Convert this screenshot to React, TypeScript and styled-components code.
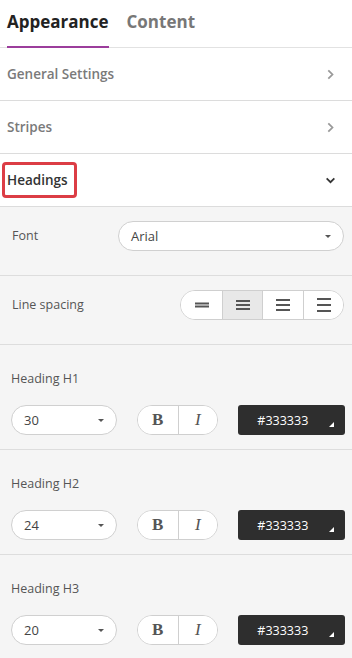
import * as React from 'react';
import styled, { createGlobalStyle } from 'styled-components';

const Global = createGlobalStyle`
  html, body {
    margin: 0;
    padding: 0;
    background: #fff;
    font-family: "Open Sans", "Noto Sans", sans-serif;
  }
  * { box-sizing: border-box; }
`;

const Panel = styled.div`
  width: 352px;
  height: 658px;
  overflow: hidden;
  background: #fff;
`;

const Tabs = styled.div`
  display: flex;
  gap: 18px;
  padding: 0 7px;
  height: 48px;
  border-bottom: 1px solid #e2e2e2;
`;

const Tab = styled.div<{ $active?: boolean }>`
  font-size: 17px;
  font-weight: 700;
  padding-top: 10px;
  color: ${(p) => (p.$active ? '#222' : '#777')};
  border-bottom: 2px solid ${(p) => (p.$active ? '#9c3d9c' : 'transparent')};
  margin-bottom: -1px;
`;

const Section = styled.div`
  height: 53px;
  display: flex;
  align-items: center;
  justify-content: space-between;
  padding: 0 16px 0 7px;
  border-bottom: 1px solid #dcdcdc;
`;

const SectionTitle = styled.div<{ $open?: boolean }>`
  font-size: 13.5px;
  font-weight: 600;
  color: ${(p) => (p.$open ? '#333' : '#7a7a7a')};
`;

// red highlight drawn around the open section's title
const Highlight = styled.span`
  display: inline-block;
  margin-left: -5px;
  padding: 5px 6px 5px 2px;
  border: 3px solid #dc3d45;
  border-radius: 4px;
  line-height: 20px;
`;

const Body = styled.div`
  background: #f5f5f5;
`;

const Row = styled.div`
  height: 69px;
  display: flex;
  align-items: flex-start;
  justify-content: space-between;
  padding: 14px 8px 0 12px;
  border-bottom: 1px solid #dddddd;
`;

const RowLabel = styled.div`
  font-size: 12.5px;
  color: #555;
  line-height: 30px;
`;

const HeadingBlock = styled.div`
  height: 105px;
  padding: 25px 7px 0 11px;
  border-bottom: 1px solid #dddddd;
`;

const Label = styled.div`
  font-size: 12.5px;
  color: #555;
  line-height: 17px;
`;

const Controls = styled.div`
  margin-top: 18px;
  display: flex;
  align-items: center;
  gap: 20px;
`;

const Select = styled.div<{ $w: number }>`
  width: ${(p) => p.$w}px;
  height: 30px;
  background: #fff;
  border: 1px solid #d0d0d0;
  border-radius: 15px;
  display: flex;
  align-items: center;
  justify-content: space-between;
  padding: 0 12px 0 12px;
  font-size: 13px;
  color: #444;
`;

const Caret = styled.span`
  width: 0;
  height: 0;
  border-left: 3px solid transparent;
  border-right: 3px solid transparent;
  border-top: 3px solid #555;
`;

const Group = styled.div`
  display: flex;
  height: 30px;
  background: #fff;
  border: 1px solid #cfcfcf;
  border-radius: 15px;
  overflow: hidden;
`;

const GroupBtn = styled.div<{ $w: number; $active?: boolean }>`
  width: ${(p) => p.$w}px;
  display: flex;
  align-items: center;
  justify-content: center;
  background: ${(p) => (p.$active ? '#e8e8e8' : '#fff')};
  & + & {
    border-left: 1px solid #cfcfcf;
  }
  font-family: "Liberation Serif", "DejaVu Serif", serif;
  font-size: 17px;
  color: #555;
`;

const Color = styled.div`
  position: relative;
  width: 107px;
  height: 30px;
  background: #2e2e2e;
  border-radius: 3px;
  color: #fff;
  font-size: 12.5px;
  display: flex;
  align-items: center;
  padding-left: 19px;
`;

const Corner = styled.span`
  position: absolute;
  right: 11px;
  bottom: 8px;
  width: 0;
  height: 0;
  border-left: 5px solid transparent;
  border-bottom: 5px solid #fff;
`;

const Chevron = ({ down }: { down?: boolean }) => (
  <svg width="11" height="11" viewBox="0 0 10 10">
    <path
      d={down ? 'M1.5 3 L5 6.5 L8.5 3' : 'M3 1.2 L6.8 5 L3 8.8'}
      fill="none"
      stroke={down ? '#333' : '#999'}
      strokeWidth="1.6"
    />
  </svg>
);

const Lines = ({ gap, thick }: { gap: number; thick?: boolean }) => {
  const n = thick ? 2 : 3;
  const h = 2;
  const total = n * h + (n - 1) * gap;
  return (
    <svg width="14" height="14" viewBox="0 0 14 14">
      {Array.from({ length: n }).map((_, i) => (
        <rect
          key={i}
          x="0"
          y={(14 - total) / 2 + i * (h + gap)}
          width="14"
          height={h}
          fill="#555"
        />
      ))}
    </svg>
  );
};

const Heading = ({ name, size }: { name: string; size: string }) => (
  <HeadingBlock>
    <Label>{name}</Label>
    <Controls>
      <Select $w={106}>
        <span>{size}</span>
        <Caret />
      </Select>
      <Group>
        <GroupBtn $w={40} style={{ fontWeight: 700 }}>B</GroupBtn>
        <GroupBtn $w={40} style={{ fontStyle: 'italic' }}>I</GroupBtn>
      </Group>
      <Color>
        #333333
        <Corner />
      </Color>
    </Controls>
  </HeadingBlock>
);

export default function App() {
  return (
    <Panel>
      <Global />
      <Tabs>
        <Tab $active>Appearance</Tab>
        <Tab>Content</Tab>
      </Tabs>
      <Section>
        <SectionTitle>General Settings</SectionTitle>
        <Chevron />
      </Section>
      <Section>
        <SectionTitle>Stripes</SectionTitle>
        <Chevron />
      </Section>
      <Section>
        <SectionTitle $open>
          <Highlight>Headings</Highlight>
        </SectionTitle>
        <Chevron down />
      </Section>
      <Body>
        <Row>
          <RowLabel>Font</RowLabel>
          <Select $w={226}>
            <span>Arial</span>
            <Caret />
          </Select>
        </Row>
        <Row>
          <RowLabel>Line spacing</RowLabel>
          <Group>
            <GroupBtn $w={41}><Lines gap={1} thick /></GroupBtn>
            <GroupBtn $w={40} $active><Lines gap={2} /></GroupBtn>
            <GroupBtn $w={41}><Lines gap={3} /></GroupBtn>
            <GroupBtn $w={40}><Lines gap={4} /></GroupBtn>
          </Group>
        </Row>
        <Heading name="Heading H1" size="30" />
        <Heading name="Heading H2" size="24" />
        <Heading name="Heading H3" size="20" />
      </Body>
    </Panel>
  );
}
